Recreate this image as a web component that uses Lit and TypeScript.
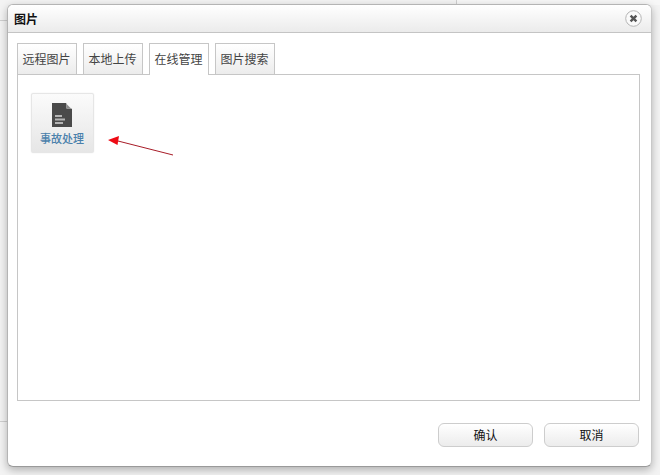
import { LitElement, html, css } from "lit";
import { customElement } from "lit/decorators.js";

@customElement("app-root")
export class AppRoot extends LitElement {
  static styles = css`
    :host {
      display: block;
      position: relative;
      width: 660px;
      height: 475px;
      overflow: hidden;
      background: #f3f3f3;
      font-family: "Noto Sans CJK SC", sans-serif;
    }
    .bgline { position: absolute; background: #cfcfcf; }
    .bg-a { left: 0; top: 20px; width: 8px; height: 1px; }
    .bg-b { left: 0; top: 421px; width: 8px; height: 1px; }
    .bg-c { left: 456px; top: 0; width: 1px; height: 5px; }
    .bg-right { position: absolute; left: 457px; top: 0; right: 0; height: 5px; background: #f7f7f7; }
    .dialog {
      position: absolute;
      left: 7px;
      top: 4px;
      width: 645px;
      height: 463px;
      box-sizing: border-box;
      display: flex;
      flex-direction: column;
      background: #fff;
      border: 1px solid #b4b4b4;
      border-right-color: #c8c8c8;
      border-bottom-color: #9a9a9a;
      border-radius: 6px;
      box-shadow: 0 3px 8px rgba(0, 0, 0, 0.28);
    }
    .head {
      flex: none;
      height: 28px;
      box-sizing: border-box;
      display: flex;
      align-items: center;
      justify-content: space-between;
      padding: 0 9px 0 6px;
      background: linear-gradient(#ffffff, #ebebeb);
      border-bottom: 1px solid #c4c4c4;
      border-radius: 5px 5px 0 0;
    }
    .title { font-size: 12px; font-weight: 700; color: #111; line-height: 16px; }
    .close { width: 17px; height: 17px; display: block; }
    .body {
      flex: 1;
      display: flex;
      flex-direction: column;
      padding: 10px 12px 0 9px;
    }
    .tabs { display: flex; gap: 6px; height: 32px; flex: none; }
    .tab {
      width: 60px;
      height: 31px;
      box-sizing: border-box;
      border: 1px solid #c6c6c6;
      border-bottom: none;
      background: linear-gradient(#ffffff, #ececec);
      font-size: 12px;
      color: #444;
      display: flex;
      align-items: center;
      justify-content: center;
      padding: 0 1px 2px 0;
      position: relative;
    }
    .tab.active {
      height: 32px;
      padding-bottom: 3px;
      background: #fff;
      z-index: 1;
    }
    .panel {
      margin-top: -1px;
      width: 623px;
      height: 327px;
      box-sizing: border-box;
      border: 1px solid #c6c6c6;
      padding: 18px 13px;
      position: relative;
    }
    .item {
      width: 63px;
      height: 60px;
      box-sizing: border-box;
      border: 1px solid #e6e6e6;
      border-radius: 2px;
      background: linear-gradient(#fbfbfb, #e6e6e6);
      box-shadow: 0 0 1px #d8d8d8;
      display: flex;
      flex-direction: column;
      align-items: center;
      padding-top: 9px;
    }
    .doc { width: 20px; height: 24px; display: block; margin-right: 1px; }
    .label { font-size: 11px; font-weight: 500; line-height: 14px; color: #4a80ab; margin-top: 4px; margin-right: 1px; white-space: nowrap; }
    .arrow { position: absolute; left: 85px; top: 55px; width: 75px; height: 30px; overflow: visible; }
    .foot {
      flex: 1;
      display: flex;
      justify-content: flex-end;
      gap: 11px;
      padding: 22px 0 0 0;
    }
    .btn {
      width: 95px;
      height: 24px;
      box-sizing: border-box;
      border: 1px solid #cdcdcd;
      border-radius: 6px;
      background: linear-gradient(#ffffff, #ececec);
      font-size: 12px;
      color: #111;
      display: flex;
      align-items: center;
      justify-content: center;
      padding-bottom: 2px;
    }
  `;

  render() {
    return html`
      <div class="bgline bg-a"></div>
      <div class="bgline bg-b"></div>
      <div class="bg-right"></div>
      <div class="bgline bg-c"></div>
      <div class="dialog">
        <div class="head">
          <span class="title">图片</span>
          <svg class="close" viewBox="0 0 17 17">
            <circle cx="8.5" cy="8.5" r="7.8" fill="#fafafa" stroke="#b5b5b5" stroke-width="1"></circle>
            <path d="M5.6 5.6 L11.4 11.4 M11.4 5.6 L5.6 11.4" stroke="#555" stroke-width="2.4" fill="none"></path>
          </svg>
        </div>
        <div class="body">
          <div class="tabs">
            <div class="tab">远程图片</div>
            <div class="tab">本地上传</div>
            <div class="tab active">在线管理</div>
            <div class="tab">图片搜索</div>
          </div>
          <div class="panel">
            <div class="item">
              <svg class="doc" viewBox="0 0 20 24">
                <path d="M0 0 H14 L20 6 V24 H0 Z" fill="#4a4a4a"></path>
                <path d="M14.5 0 L20 5.5 H14.5 Z" fill="#fff"></path>
                <path d="M14.5 1 L19 5.5 H14.5 Z" fill="#8a8a8a"></path>
                <rect x="3" y="12" width="7" height="2" fill="#b5b5b5"></rect>
                <rect x="3" y="15.5" width="10" height="2" fill="#b5b5b5"></rect>
                <rect x="3" y="19" width="8" height="2" fill="#b5b5b5"></rect>
              </svg>
              <div class="label">事故处理</div>
            </div>
            <svg class="arrow" viewBox="0 0 75 30">
              <line x1="70" y1="25" x2="15" y2="11" stroke="#a81c28" stroke-width="1"></line>
              <path d="M5 10 L16 6 L14.5 15 Z" fill="#ee0a14"></path>
            </svg>
          </div>
          <div class="foot">
            <div class="btn">确认</div>
            <div class="btn">取消</div>
          </div>
        </div>
      </div>
    `;
  }
}
